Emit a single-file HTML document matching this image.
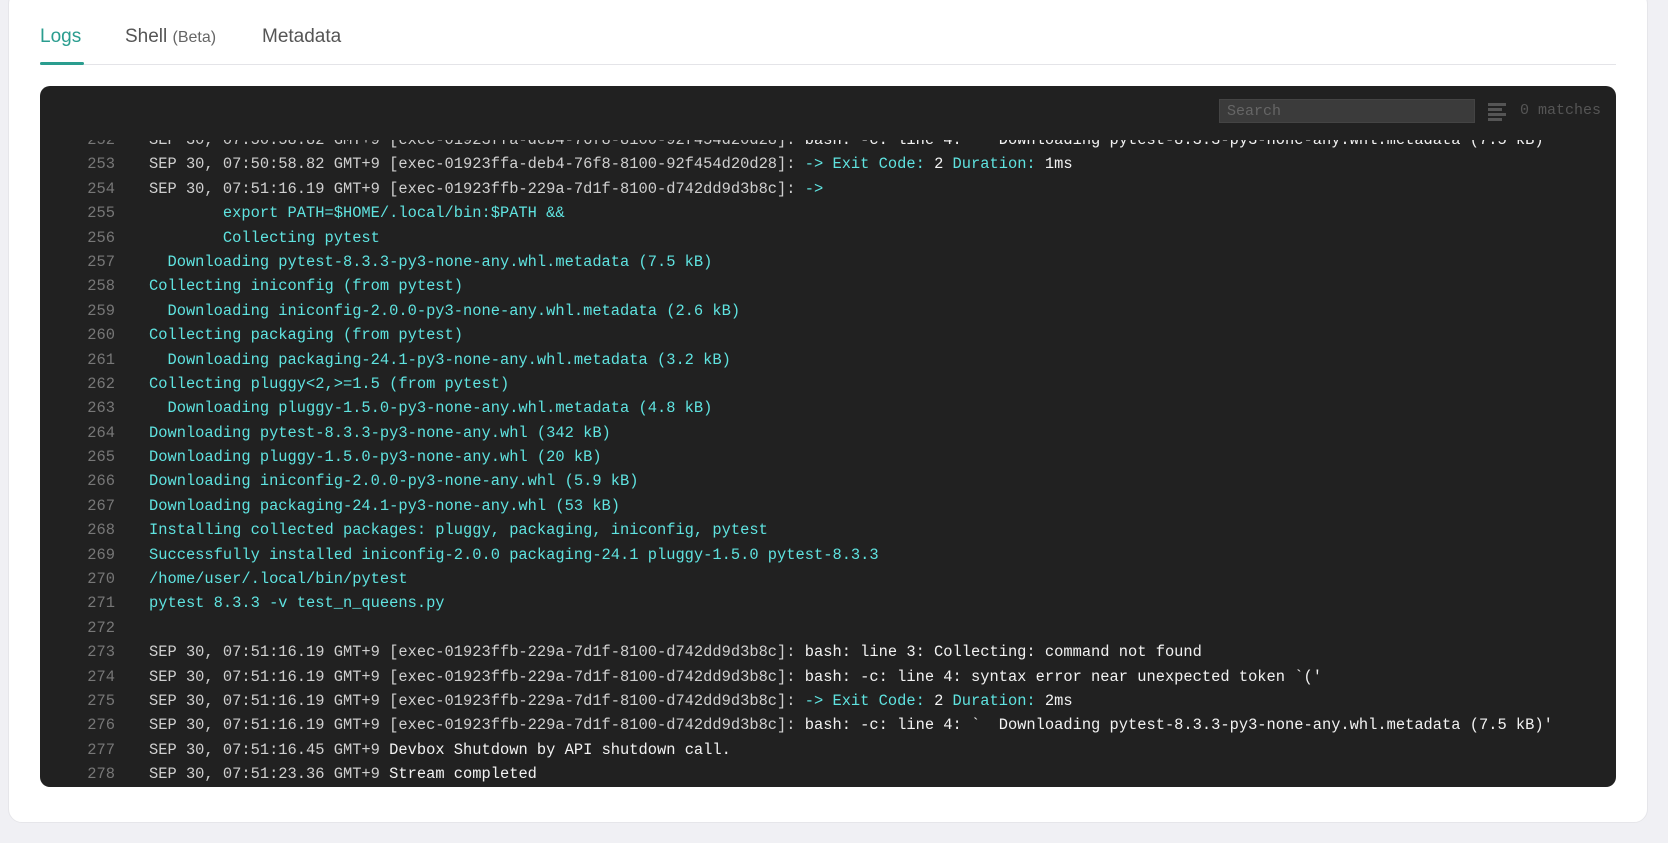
<!DOCTYPE html>
<html><head><meta charset="utf-8"><style>
*{margin:0;padding:0;box-sizing:border-box}
body{width:1668px;height:843px;background:#f0f0f4;font-family:"Liberation Sans",sans-serif;overflow:hidden;position:relative}
.card{position:absolute;left:8px;top:-10px;width:1640px;height:833px;background:#fff;border-radius:14px;border:1px solid #e6e6ea}
.tabs{position:absolute;left:40px;top:26px;font-size:19px;color:#555}
.tab{position:absolute;white-space:nowrap;top:0}
.tab small{font-size:16px;color:#666}
.ul{position:absolute;left:40px;top:62px;width:44px;height:3px;background:#2a9d8f;border-radius:2px}
.div{position:absolute;left:40px;top:64px;width:1576px;height:1px;background:#e4e4e8}
.term{position:absolute;left:40px;top:86px;width:1576px;height:701px;background:#212121;border-radius:10px;overflow:hidden}
.search{position:absolute;left:1179px;top:13px;width:256px;height:24px;background:#3b3b3b;border:1px solid #444;color:#666;font:15px "Liberation Mono",monospace;padding:3px 7px}
.mt{position:absolute;left:1480px;top:16px;color:#555;font:15px "Liberation Mono",monospace}
.ic{position:absolute;left:1448px;top:17px}
.ic i{display:block;height:3px;background:#555;margin-bottom:2px}
.log{position:absolute;left:0;top:54px;width:1576px;height:647px;overflow:hidden}
.lines{position:absolute;top:-12px;left:0;font:15.4px/24.4px "Liberation Mono",monospace;color:#f2f2f2}
.l{height:24.4px;white-space:pre}
.n{display:inline-block;width:75px;text-align:right;color:#777;margin-right:34px}
.t{color:#cfcfcf}
.c{color:#5fe3e0}
</style></head><body>
<div class="card"></div>
<div class="tabs">
<span class="tab" style="left:0;color:#2a9d8f">Logs</span>
<span class="tab" style="left:85px">Shell <small>(Beta)</small></span>
<span class="tab" style="left:222px">Metadata</span>
</div>
<div class="div"></div><div class="ul"></div>
<div class="term">
<div class="search">Search</div>
<div class="ic"><i style="width:18px"></i><i style="width:14px"></i><i style="width:18px"></i><i style="width:14px"></i></div>
<div class="mt">0 matches</div>
<div class="log"><div class="lines">
<div class="l"><span class="n">252</span><span class="t">SEP 30, 07:50:58.82 GMT+9 [exec-01923ffa-deb4-76f8-8100-92f454d20d28]: </span>bash: -c: line 4: `  Downloading pytest-8.3.3-py3-none-any.whl.metadata (7.5 kB)'</div>
<div class="l"><span class="n">253</span><span class="t">SEP 30, 07:50:58.82 GMT+9 [exec-01923ffa-deb4-76f8-8100-92f454d20d28]: </span><span class="c">-&gt; Exit Code: </span>2 <span class="c">Duration: </span>1ms</div>
<div class="l"><span class="n">254</span><span class="t">SEP 30, 07:51:16.19 GMT+9 [exec-01923ffb-229a-7d1f-8100-d742dd9d3b8c]: </span><span class="c">-&gt;</span></div>
<div class="l c"><span class="n">255</span>        export PATH=$HOME/.local/bin:$PATH &amp;&amp;</div>
<div class="l c"><span class="n">256</span>        Collecting pytest</div>
<div class="l c"><span class="n">257</span>  Downloading pytest-8.3.3-py3-none-any.whl.metadata (7.5 kB)</div>
<div class="l c"><span class="n">258</span>Collecting iniconfig (from pytest)</div>
<div class="l c"><span class="n">259</span>  Downloading iniconfig-2.0.0-py3-none-any.whl.metadata (2.6 kB)</div>
<div class="l c"><span class="n">260</span>Collecting packaging (from pytest)</div>
<div class="l c"><span class="n">261</span>  Downloading packaging-24.1-py3-none-any.whl.metadata (3.2 kB)</div>
<div class="l c"><span class="n">262</span>Collecting pluggy&lt;2,&gt;=1.5 (from pytest)</div>
<div class="l c"><span class="n">263</span>  Downloading pluggy-1.5.0-py3-none-any.whl.metadata (4.8 kB)</div>
<div class="l c"><span class="n">264</span>Downloading pytest-8.3.3-py3-none-any.whl (342 kB)</div>
<div class="l c"><span class="n">265</span>Downloading pluggy-1.5.0-py3-none-any.whl (20 kB)</div>
<div class="l c"><span class="n">266</span>Downloading iniconfig-2.0.0-py3-none-any.whl (5.9 kB)</div>
<div class="l c"><span class="n">267</span>Downloading packaging-24.1-py3-none-any.whl (53 kB)</div>
<div class="l c"><span class="n">268</span>Installing collected packages: pluggy, packaging, iniconfig, pytest</div>
<div class="l c"><span class="n">269</span>Successfully installed iniconfig-2.0.0 packaging-24.1 pluggy-1.5.0 pytest-8.3.3</div>
<div class="l c"><span class="n">270</span>/home/user/.local/bin/pytest</div>
<div class="l c"><span class="n">271</span>pytest 8.3.3 -v test_n_queens.py</div>
<div class="l c"><span class="n">272</span></div>
<div class="l"><span class="n">273</span><span class="t">SEP 30, 07:51:16.19 GMT+9 [exec-01923ffb-229a-7d1f-8100-d742dd9d3b8c]: </span>bash: line 3: Collecting: command not found</div>
<div class="l"><span class="n">274</span><span class="t">SEP 30, 07:51:16.19 GMT+9 [exec-01923ffb-229a-7d1f-8100-d742dd9d3b8c]: </span>bash: -c: line 4: syntax error near unexpected token `('</div>
<div class="l"><span class="n">275</span><span class="t">SEP 30, 07:51:16.19 GMT+9 [exec-01923ffb-229a-7d1f-8100-d742dd9d3b8c]: </span><span class="c">-&gt; Exit Code: </span>2 <span class="c">Duration: </span>2ms</div>
<div class="l"><span class="n">276</span><span class="t">SEP 30, 07:51:16.19 GMT+9 [exec-01923ffb-229a-7d1f-8100-d742dd9d3b8c]: </span>bash: -c: line 4: `  Downloading pytest-8.3.3-py3-none-any.whl.metadata (7.5 kB)'</div>
<div class="l"><span class="n">277</span><span class="t">SEP 30, 07:51:16.45 GMT+9 </span>Devbox Shutdown by API shutdown call.</div>
<div class="l"><span class="n">278</span><span class="t">SEP 30, 07:51:23.36 GMT+9 </span>Stream completed</div>
</div></div>
</div>
</body></html>
